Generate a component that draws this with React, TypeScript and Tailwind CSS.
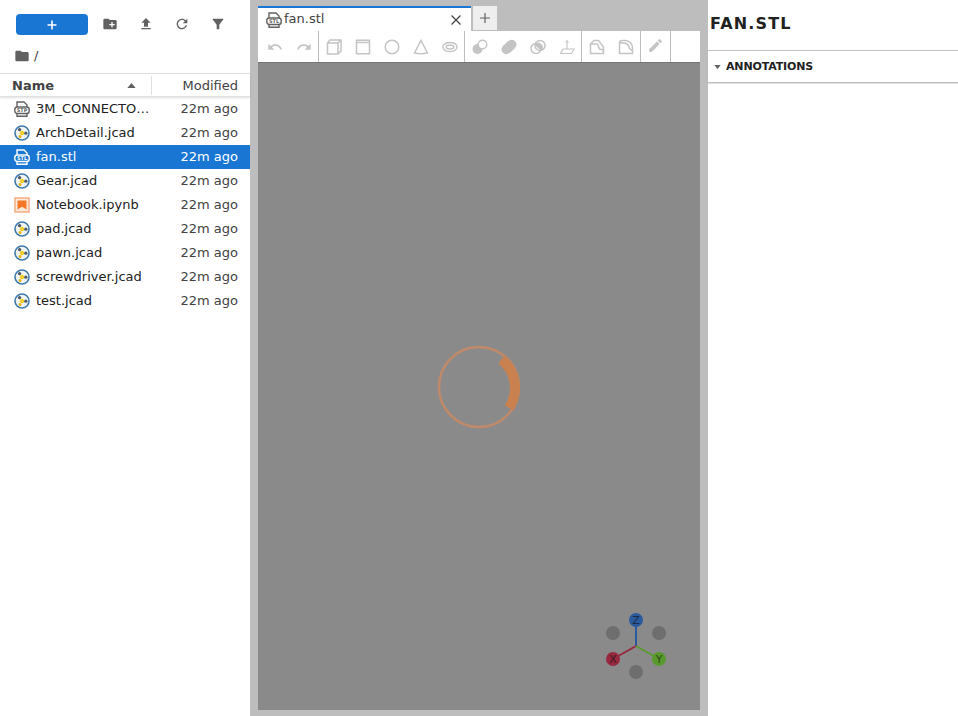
import type { ReactNode } from 'react'

const files = [
  { name: '3M_CONNECTOR.STEP', type: 'stp' },
  { name: 'ArchDetail.jcad', type: 'jcad' },
  { name: 'fan.stl', type: 'stl', selected: true },
  { name: 'Gear.jcad', type: 'jcad' },
  { name: 'Notebook.ipynb', type: 'nb' },
  { name: 'pad.jcad', type: 'jcad' },
  { name: 'pawn.jcad', type: 'jcad' },
  { name: 'screwdriver.jcad', type: 'jcad' },
  { name: 'test.jcad', type: 'jcad' },
]

function Mat({ d, className }: { d: string; className?: string }) {
  return (
    <svg viewBox="0 0 24 24" className={className} fill="currentColor">
      <path d={d} />
    </svg>
  )
}

function JcadIcon() {
  return (
    <svg viewBox="0 0 16 16" className="w-4 h-4 shrink-0">
      <circle cx="8" cy="8" r="7" fill="#f1f4f7" stroke="#3d7bad" strokeWidth="1.6" />
      <circle cx="8" cy="8" r="2.2" fill="#f2d024" />
      <circle cx="5.6" cy="4.6" r="1.7" fill="#4f5a66" />
      <circle cx="11.8" cy="8.2" r="1.6" fill="#4f5a66" />
      <circle cx="6" cy="11.6" r="1.6" fill="#e8b820" />
    </svg>
  )
}

function MeshIcon({ label, light }: { label: string; light?: boolean }) {
  const c = light ? '#ffffff' : '#616161'
  return (
    <svg viewBox="0 0 16 16" className="w-4 h-4 shrink-0">
      <path d="M3 6V1h7l3 3v2" fill="none" stroke={c} strokeWidth="1.4" />
      <rect x="0.8" y="6" width="14.4" height="6.5" rx="2.5" fill="none" stroke={c} strokeWidth="1.4" />
      <path d="M3 12.5V15.2h10v-2.7" fill="none" stroke={c} strokeWidth="1.4" />
      <text x="8" y="11" textAnchor="middle" fontSize="5" fontWeight="700" fill={c} fontFamily="'DejaVu Sans', sans-serif">
        {label}
      </text>
    </svg>
  )
}

function NotebookIcon() {
  return (
    <svg viewBox="0 0 16 16" className="w-4 h-4 shrink-0">
      <rect x="1" y="1" width="14" height="14" fill="#fde9dc" stroke="#f4a77a" strokeWidth="1.4" />
      <path d="M3.5 3.5h9v9L8 9.8l-4.5 2.7z" fill="#f37726" />
    </svg>
  )
}

function FileIcon({ type, selected }: { type: string; selected?: boolean }) {
  if (type === 'jcad') return <JcadIcon />
  if (type === 'nb') return <NotebookIcon />
  return <MeshIcon label={type.toUpperCase()} light={selected} />
}

function ToolBtn({ children }: { children: ReactNode }) {
  return <div className="w-[29px] h-full flex items-center justify-center text-[#c4c4c4]">{children}</div>
}

function ToolGroup({ children }: { children: ReactNode }) {
  return <div className="flex h-full border-r border-[#bdbdbd]">{children}</div>
}

const line = { fill: 'none', stroke: 'currentColor', strokeWidth: 1.5 }

function Draw({ children }: { children: ReactNode }) {
  return (
    <svg viewBox="0 0 16 16" className="w-4 h-4">
      {children}
    </svg>
  )
}

export default function App() {
  return (
    <div className="w-[958px] h-[716px] flex bg-[#bdbdbd] overflow-hidden font-['DejaVu_Sans',sans-serif] text-[13px] text-[#212121]">
      {/* File browser */}
      <aside className="w-[250px] h-full bg-white flex flex-col shrink-0">
        <div className="h-[48px] flex items-start pl-4 pt-[14px]">
          <button className="w-[72px] h-[21px] rounded-sm bg-[#1976d2] text-white flex items-center justify-center">
            <svg viewBox="0 0 12 12" className="w-3 h-3">
              <path d="M6 1.5v9M1.5 6h9" stroke="currentColor" strokeWidth="1.6" />
            </svg>
          </button>
          <div className="flex text-[#616161] ml-[4px] mt-[2px]">
            <div className="w-9 flex justify-center">
              <Mat className="w-4 h-4" d="M20 6h-8l-2-2H4c-1.11 0-1.99.89-1.99 2L2 18c0 1.11.89 2 2 2h16c1.11 0 2-.89 2-2V8c0-1.11-.89-2-2-2zm-1 8h-3v3h-2v-3h-3v-2h3V9h2v3h3v2z" />
            </div>
            <div className="w-9 flex justify-center">
              <Mat className="w-4 h-4" d="M9 16h6v-6h4l-7-7-7 7h4zm-4 2h14v2H5z" />
            </div>
            <div className="w-9 flex justify-center">
              <Mat className="w-4 h-4" d="M17.65 6.35C16.2 4.9 14.21 4 12 4c-4.42 0-7.99 3.58-7.99 8s3.57 8 7.99 8c3.73 0 6.84-2.55 7.73-6h-2.08c-.82 2.33-3.04 4-5.65 4-3.31 0-6-2.69-6-6s2.69-6 6-6c1.66 0 3.14.69 4.22 1.78L13 11h7V4l-2.35 2.35z" />
            </div>
            <div className="w-9 flex justify-center">
              <Mat className="w-4 h-4" d="M4.25 5.61C6.27 8.2 10 13 10 13v6c0 .55.45 1 1 1h2c.55 0 1-.45 1-1v-6s3.72-4.8 5.74-7.39A1 1 0 0 0 18.95 4H5.04a1 1 0 0 0-.79 1.61z" />
            </div>
          </div>
        </div>
        <div className="h-[25px] pl-[14px] pb-[10px] flex items-center gap-[4px] text-[#424242]">
          <Mat className="w-4 h-4 text-[#616161]" d="M10 4H4c-1.1 0-2 .9-2 2v12c0 1.1.9 2 2 2h16c1.1 0 2-.9 2-2V8c0-1.1-.9-2-2-2h-8l-2-2z" />
          <span>/</span>
        </div>
        <div className="h-[24px] border-t border-b border-[#e0e0e0] shadow-[0_1px_2px_rgba(0,0,0,0.12)] flex items-center">
          <div className="w-[152px] h-[19px] pl-3 pr-[15px] flex items-center justify-between border-r border-[#e0e0e0]">
            <span className="font-bold text-[#424242] pt-[2px]">Name</span>
            <svg viewBox="0 0 10 6" className="w-[9px] h-[5px] text-[#616161]">
              <path d="M5 0l5 6H0z" fill="currentColor" />
            </svg>
          </div>
          <span className="flex-1 text-right pr-3 pt-[2px] text-[#424242]">Modified</span>
        </div>
        <ul>
          {files.map((f) => (
            <li
              key={f.name}
              className={`h-6 flex items-center pl-[14px] pr-3 ${f.selected ? 'bg-[#1976d2] text-white' : ''}`}
            >
              <FileIcon type={f.type} selected={f.selected} />
              <span className="ml-[6px] w-[114px] truncate">{f.name}</span>
              <span className={`flex-1 text-right ${f.selected ? '' : 'text-[#424242]'}`}>22m ago</span>
            </li>
          ))}
        </ul>
      </aside>

      {/* Main area */}
      <main className="w-[442px] h-[710px] ml-2 flex flex-col shrink-0">
        <div className="h-[31px] pt-[6px] flex items-start">
          <div className="w-[213px] h-[25px] bg-white border-t-2 border-[#1976d2] flex items-center pl-2 pr-[9px]">
            <MeshIcon label="STL" />
            <span className="ml-[2px] pb-[2px] flex-1 text-[#424242]">fan.stl</span>
            <svg viewBox="0 0 12 12" className="w-3 h-3 text-[#424242]">
              <path d="M1.5 1.5l9 9M10.5 1.5l-9 9" stroke="currentColor" strokeWidth="1.2" />
            </svg>
          </div>
          <div className="ml-[2px] w-[24px] h-[24px] bg-[#eeeeee] flex items-center justify-center text-[#616161]">
            <svg viewBox="0 0 12 12" className="w-3 h-3">
              <path d="M6 1v10M1 6h10" stroke="currentColor" strokeWidth="1.2" />
            </svg>
          </div>
        </div>
        <div className="h-[32px] bg-white border-b border-[#757575] flex pl-[2px]">
          <ToolGroup>
            <ToolBtn>
              <Mat className="w-4 h-4" d="M12.5 8c-2.65 0-5.05.99-6.9 2.6L2 7v9h9l-3.62-3.62c1.39-1.16 3.16-1.88 5.12-1.88 3.54 0 6.55 2.31 7.6 5.5l2.37-.78C21.08 11.03 17.15 8 12.5 8z" />
            </ToolBtn>
            <ToolBtn>
              <Mat className="w-4 h-4" d="M18.4 10.6C16.55 8.99 14.15 8 11.5 8c-4.65 0-8.58 3.03-9.96 7.22L3.9 16c1.05-3.19 4.05-5.5 7.6-5.5 1.95 0 3.73.72 5.12 1.88L13 16h9V7l-3.6 3.6z" />
            </ToolBtn>
          </ToolGroup>
          <ToolGroup>
            <ToolBtn>
              <Draw>
                <path d="M1.5 4h10.5v11H1.5zM1.5 4L4 1h11v11l-3 3M12 4l3-3" {...line} />
              </Draw>
            </ToolBtn>
            <ToolBtn>
              <Draw>
                <path d="M1.5 1.2h13v13.6h-13zM1.5 3.4h13" {...line} />
              </Draw>
            </ToolBtn>
            <ToolBtn>
              <Draw>
                <circle cx="8" cy="8" r="6.8" {...line} />
              </Draw>
            </ToolBtn>
            <ToolBtn>
              <Draw>
                <path d="M8 1.5L14.5 14q-6.5 1.5-13 0z" {...line} />
              </Draw>
            </ToolBtn>
            <ToolBtn>
              <Draw>
                <ellipse cx="8" cy="8" rx="7" ry="4.6" {...line} />
                <ellipse cx="8" cy="8" rx="3.8" ry="2" {...line} />
              </Draw>
            </ToolBtn>
          </ToolGroup>
          <ToolGroup>
            <ToolBtn>
              <Draw>
                <circle cx="5.5" cy="10" r="5" fill="currentColor" />
                <circle cx="10.5" cy="5.5" r="4.3" fill="#fff" stroke="currentColor" strokeWidth="1.4" />
              </Draw>
            </ToolBtn>
            <ToolBtn>
              <Draw>
                <circle cx="5.2" cy="10.5" r="4.7" fill="currentColor" />
                <circle cx="10.8" cy="5.5" r="4.7" fill="currentColor" />
                <path d="M2 7l5-5 7 7-5 5z" fill="currentColor" />
              </Draw>
            </ToolBtn>
            <ToolBtn>
              <Draw>
                <circle cx="6" cy="9.5" r="5" {...line} />
                <circle cx="10" cy="6.5" r="5" {...line} />
                <path d="M4.2 5.6l7 6.4 2-2.2-.6-3.6-3.6-3z" fill="currentColor" />
              </Draw>
            </ToolBtn>
            <ToolBtn>
              <Draw>
                <path d="M8 1v9M6.3 3h3.4M4 10h11l-2.5 4.5H1.5z" {...line} strokeWidth={1.1} />
              </Draw>
            </ToolBtn>
          </ToolGroup>
          <ToolGroup>
            <ToolBtn>
              <Draw>
                <path d="M1.5 5L5 1.5h4.5l5 6.5v6.5h-13zM1 5h7.5l2 5 4 1" {...line} />
              </Draw>
            </ToolBtn>
            <ToolBtn>
              <Draw>
                <path d="M1.5 4q0-2.5 3-2.5h3q7 1 7 8v5h-13zM1.5 4h5q4.5 1 5 5.5l2.5 2" {...line} />
              </Draw>
            </ToolBtn>
          </ToolGroup>
          <ToolGroup>
            <ToolBtn>
              <Mat className="w-[17px] h-[17px] mb-[2px]" d="M3 17.25V21h3.75L17.81 9.94l-3.75-3.75L3 17.25zM20.71 7.04a1 1 0 0 0 0-1.41l-2.34-2.34a1 1 0 0 0-1.41 0l-1.83 1.83 3.75 3.75 1.83-1.83z" />
            </ToolBtn>
          </ToolGroup>
        </div>
        <div className="relative flex-1 bg-[#8a8a8a] flex items-center justify-center">
          {/* Loading spinner */}
          <svg viewBox="0 0 86 86" className="w-[86px] h-[86px]">
            <circle cx="43" cy="43" r="40" fill="none" stroke="#c08a6a" strokeWidth="2.5" />
            <path d="M65.5 15.5 A37 37 0 0 1 73 64" fill="none" stroke="#c9814f" strokeWidth="10" />
          </svg>
          {/* Axis gizmo */}
          <svg viewBox="0 0 80 80" className="absolute left-[338px] bottom-[18px] w-[80px] h-[80px]">
            <circle cx="17" cy="21" r="7" fill="#6e6e6e" />
            <circle cx="63" cy="21" r="7" fill="#6e6e6e" />
            <circle cx="40" cy="60" r="7" fill="#6e6e6e" />
            <path d="M40 34V8" stroke="#2a5a9e" strokeWidth="2" />
            <path d="M40 34L17 47" stroke="#96283f" strokeWidth="2" />
            <path d="M40 34L63 47" stroke="#5a9a2c" strokeWidth="2" />
            <circle cx="40" cy="8" r="7" fill="#2a5a9e" />
            <circle cx="17" cy="47" r="7" fill="#96283f" />
            <circle cx="63" cy="47" r="7" fill="#5a9a2c" />
            <text x="40" y="12" textAnchor="middle" fontSize="11" fill="#1c2b3f" fontFamily="'DejaVu Sans', sans-serif">Z</text>
            <text x="17" y="51" textAnchor="middle" fontSize="11" fill="#3f1a24" fontFamily="'DejaVu Sans', sans-serif">X</text>
            <text x="63" y="51" textAnchor="middle" fontSize="11" fill="#2b4a1a" fontFamily="'DejaVu Sans', sans-serif">Y</text>
          </svg>
        </div>
      </main>

      {/* Right panel */}
      <aside className="w-[250px] h-full bg-white ml-2 shrink-0">
        <div className="h-[51px] border-b border-[#c4c4c4] pl-[2px] pt-[13px] text-base leading-[22px] font-bold tracking-[1.15px] text-[#212121]">
          FAN.STL
        </div>
        <div className="h-[32px] border-b border-[#bdbdbd] shadow-[0_1px_1px_rgba(0,0,0,0.1)] flex items-center pl-[6px] pt-[1px] font-bold text-[11px] tracking-[-0.15px]">
          <svg viewBox="0 0 8 5" className="w-[7px] h-[4px] text-[#616161] mr-[5px]">
            <path d="M0 0h8L4 5z" fill="currentColor" />
          </svg>
          ANNOTATIONS
        </div>
      </aside>
    </div>
  )
}
